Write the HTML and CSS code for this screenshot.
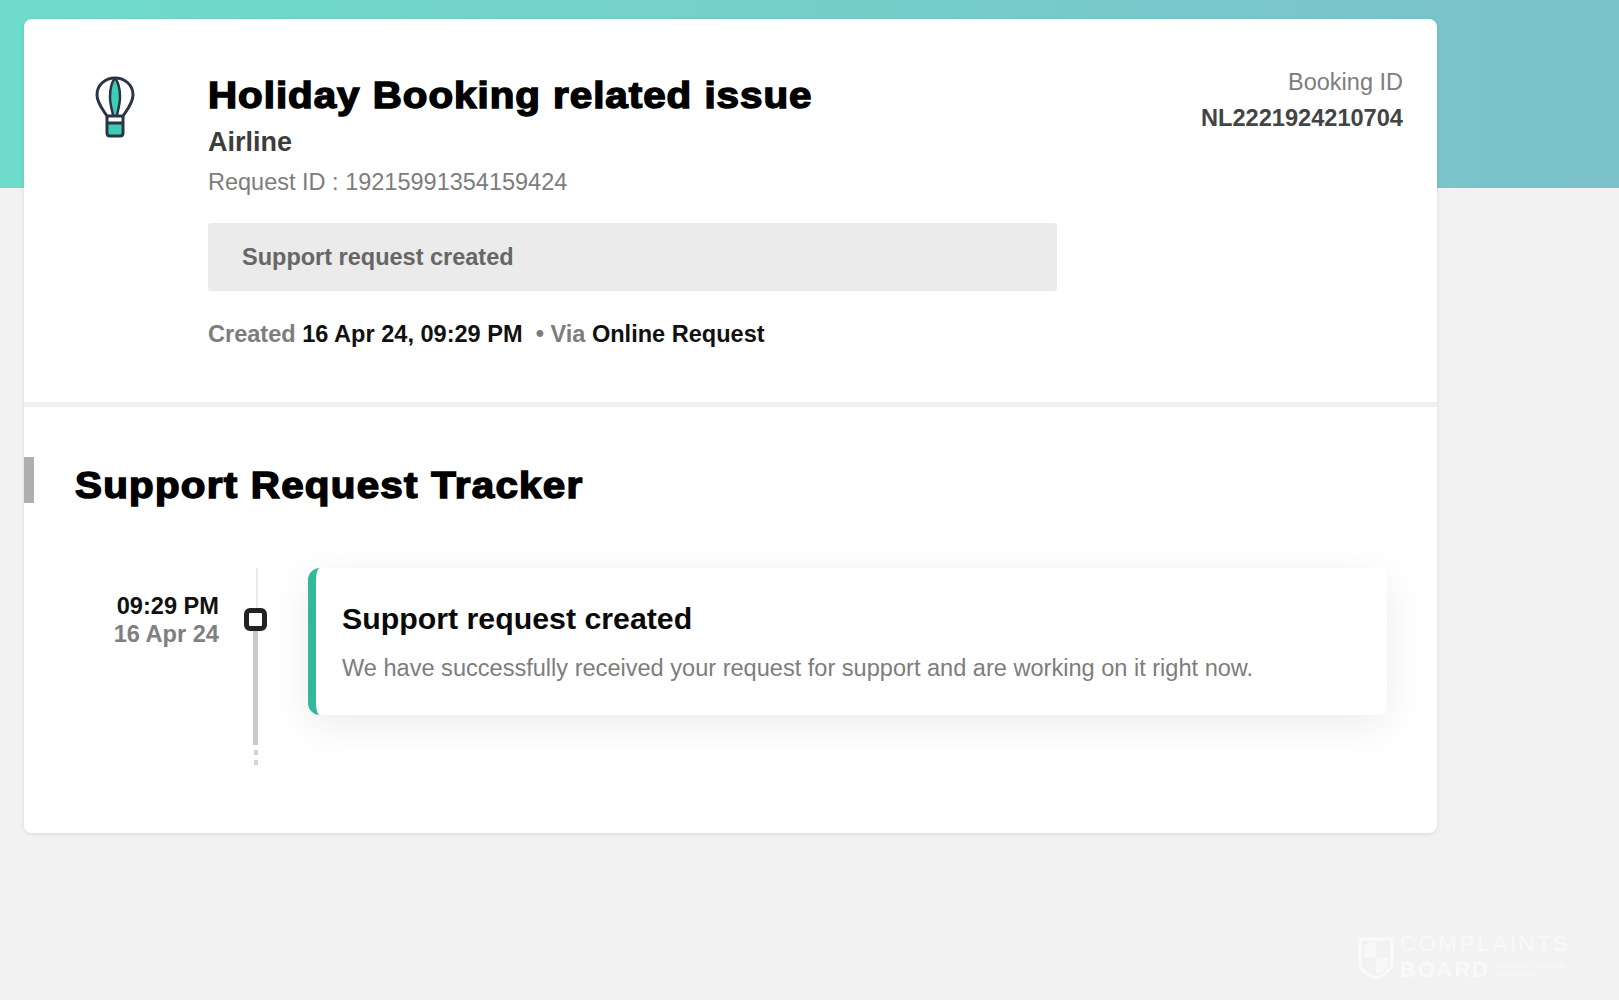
FILE: index.html
```html
<!DOCTYPE html>
<html lang="en">
<head>
<meta charset="utf-8">
<title>Support Request</title>
<link rel="stylesheet" href="styles.css">
</head>
<body>
<main class="card">
  <section class="summary">
    <div class="summary-icon">
      <svg width="46" height="62" viewBox="0 0 46 62" fill="none" aria-hidden="true">
        <path d="M23 2C19 7 18 14 18 21C18 28 20 34 21 39H25C26 34 28 28 28 21C28 14 27 7 23 2Z" fill="#3dcdb5"/>
        <path d="M15 40C11 34 5 27 5 19C5 9 13 2 23 2C33 2 41 9 41 19C41 27 35 34 31 40Z" stroke="#2b3346" stroke-width="3" stroke-linejoin="round"/>
        <path d="M23 2C19 7 18 14 18 21C18 28 20 34 21 39M23 2C27 7 28 14 28 21C28 28 26 34 25 39" stroke="#2b3346" stroke-width="2.500"/>
        <rect x="15" y="47" width="16" height="12" fill="#3dcdb5"/>
        <path d="M15 40V57C15 59 16 60 18 60H28C30 60 31 59 31 57V40M15 47H31" stroke="#2b3346" stroke-width="3"/>
      </svg>
    </div>
    <div class="summary-main">
      <h1 class="page-title"><span class="wide-text wide-text-a">Holiday Booking related issue</span></h1>
      <div class="category">Airline</div>
      <div class="request-id">Request ID : 19215991354159424</div>
      <div class="status-box">Support request created</div>
      <div class="meta">Created <b>16 Apr 24, 09:29 PM</b> &nbsp;• Via <b>Online Request</b></div>
    </div>
    <div class="booking">
      <div class="booking-label">Booking ID</div>
      <div class="booking-value">NL2221924210704</div>
    </div>
  </section>
  <section class="tracker">
    <h2 class="tracker-title"><span class="wide-text wide-text-b">Support Request Tracker</span></h2>
    <div class="timeline">
      <div class="time">
        <div class="time-clock">09:29 PM</div>
        <div class="time-date">16 Apr 24</div>
      </div>
      <div class="rail">
        <span class="rail-top"></span>
        <span class="rail-node"></span>
        <span class="rail-line"></span>
        <span class="rail-dot"></span>
        <span class="rail-dot"></span>
      </div>
      <article class="event">
        <h3 class="event-title">Support request created</h3>
        <p class="event-text">We have successfully received your request for support and are working on it right now.</p>
      </article>
    </div>
  </section>
</main>
<div class="watermark">
  <svg class="wm-shield" width="36" height="44" viewBox="0 0 36 44" fill="none" aria-hidden="true">
    <path d="M2 3H34V26C34 34 26 39 18 42C10 39 2 34 2 26Z" stroke="#fafafa" stroke-width="3"/>
    <path d="M18 6V22H6V8ZM18 22H30V30C28 34 23 37 18 38Z" fill="#f8f8f8"/>
  </svg>
  <div class="watermark-text">
    <div class="wm-top">COMPLAINTS</div>
    <div class="wm-bottom"><span class="wm-board">BOARD</span><span class="wm-small">Consumer Complaints and Reviews</span></div>
  </div>
</div>
</body>
</html>
```

FILE: styles.css
```css
* { box-sizing: border-box; }
html, body { margin: 0; height: 100%; }
body {
  height: 1000px;
  overflow: hidden;
  padding: 19px 0 0 24px;
  font-family: "Liberation Sans", Arial, sans-serif;
  background-color: #f2f2f2;
  background-image: linear-gradient(90deg, #6fdccb 0%, #7bc1ca 100%);
  background-size: 100% 188px;
  background-repeat: no-repeat;
  position: relative;
}
.card {
  width: 1413px;
  height: 814px;
  background: #fff;
  border-radius: 8px;
  box-shadow: 0 1px 4px rgba(0, 0, 0, .1);
  overflow: hidden;
}
.summary {
  display: flex;
  height: 388px;
  padding: 0 34px 0 68px;
  border-bottom: 5px solid #f0f0f0;
}
.summary-icon { width: 116px; padding-top: 57px; flex: none; }
.summary-icon svg { display: block; }
.summary-main { flex: 1; padding-top: 55px; }
.page-title {
  margin: 0;
  font-size: 37px;
  line-height: 44px;
  font-weight: 700;
  color: #000;
}
.wide-text {
  display: inline-block;
  white-space: nowrap;
  transform: scaleX(1.09);
  transform-origin: left center;
  -webkit-text-stroke: 1.5px #000;
}
.wide-text-a { letter-spacing: .9px; }
.wide-text-b { letter-spacing: 1.15px; }
.category { margin-top: 8px; font-size: 27px; line-height: 32px; font-weight: 700; color: #3c3c3c; }
.request-id { margin-top: 9px; font-size: 23.5px; line-height: 30px; color: #7d7d7d; }
.status-box {
  width: 849px;
  height: 68px;
  margin-top: 26px;
  padding-left: 34px;
  background: #ebebeb;
  border-radius: 3px;
  font-size: 23.5px;
  line-height: 68px;
  font-weight: 700;
  color: #666;
}
.meta { margin-top: 28px; font-size: 23.55px; line-height: 30px; font-weight: 700; color: #7d7d7d; }
.meta b { color: #111; }
.booking { text-align: right; padding-top: 48px; flex: none; }
.booking-label { font-size: 23.5px; line-height: 30px; color: #7d7d7d; }
.booking-value { margin-top: 6px; font-size: 23.6px; line-height: 30px; font-weight: 700; color: #444; }
.tracker { padding-top: 50px; }
.tracker-title {
  margin: 0;
  height: 46px;
  padding-left: 41px;
  border-left: 10px solid #aeaeae;
  font-size: 37px;
  line-height: 57px;
  font-weight: 700;
  color: #000;
}
.timeline {
  display: grid;
  grid-template-columns: 195px 89px 1079px;
  align-items: start;
  margin-top: 65px;
}
.time { padding-top: 24px; text-align: right; }
.time-clock { font-size: 23.6px; line-height: 28px; font-weight: 700; color: #111; }
.time-date { font-size: 23.6px; line-height: 28px; font-weight: 700; color: #808080; }
.rail { display: flex; flex-direction: column; padding-left: 25px; }
.rail-top { flex: none; width: 2px; height: 40px; margin-left: 12px; background: #e8e8e8; }
.rail-node { flex: none; width: 23px; height: 23px; border: 5px solid #222; border-radius: 6px; background: #fff; }
.rail-line { flex: none; width: 5px; height: 114px; margin-left: 9px; background: #cacaca; }
.rail-dot { flex: none; width: 4px; height: 5px; margin: 5px 0 0 10px; background: #d4d4d4; }
.event {
  height: 147px;
  padding: 33px 0 0 26px;
  background: #fff;
  border-left: 8px solid #34b89c;
  border-radius: 12px 8px 8px 12px;
  box-shadow: 0 10px 40px rgba(0, 0, 0, .08);
}
.event-title { margin: 0; font-size: 30.3px; line-height: 36px; font-weight: 700; color: #0a0a0a; }
.event-text { margin: 16px 0 0; font-size: 23.57px; line-height: 30px; color: #7d7d7d; }
.watermark {
  position: absolute;
  left: 1358px;
  top: 931px;
  display: flex;
  gap: 6px;
}
.wm-shield { margin-top: 5px; }
.watermark-text { color: #f9f9f9; width: 172px; }
.wm-top { font-size: 22px; letter-spacing: 2.8px; line-height: 26px; }
.wm-bottom { display: flex; gap: 6px; align-items: center; font-size: 22px; line-height: 26px; font-weight: 700; }
.wm-board { letter-spacing: 1.8px; }
.wm-small { font-size: 7px; line-height: 8px; font-weight: 400; }
```
